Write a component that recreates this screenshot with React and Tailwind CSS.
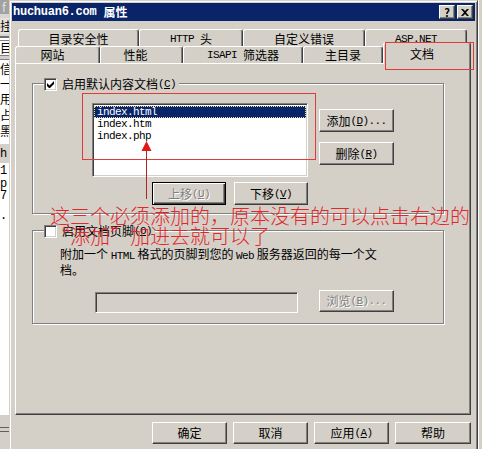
import React from 'react';

// Latin text in the dialog is a narrow mono face, like SimSun's half-width glyphs
function M({ children }) {
  return (
    <span className="font-['Liberation_Mono','Courier_New',monospace] text-[11px] tracking-[-0.6px]">
      {children}
    </span>
  );
}

function Key({ k, dots }) {
  return (
    <M>
      (<u className="underline">{k}</u>){dots ? '...' : ''}
    </M>
  );
}

function Button({ className = '', disabled, children }) {
  return (
    <div
      className={`flex items-center justify-center bg-[#d4d0c8] border border-t-white border-l-white border-r-[#404040] border-b-[#404040] shadow-[inset_-1px_-1px_0_#808080] ${
        disabled ? 'text-[#808080] [text-shadow:1px_1px_0_#ffffff]' : 'text-black'
      } ${className}`}
    >
      {children}
    </div>
  );
}

function Checkbox({ checked }) {
  return (
    <div className="w-[13px] h-[13px] shrink-0 bg-white border border-t-[#808080] border-l-[#808080] border-b-white border-r-white shadow-[inset_1px_1px_0_#404040,inset_-1px_-1px_0_#d4d0c8] flex items-center justify-center">
      {checked && (
        <svg width="7" height="7" viewBox="0 0 7 7">
          <path d="M0 2v3l2 2h1l4-4V0L2.5 4.5z" fill="#000" />
        </svg>
      )}
    </div>
  );
}

function LeftStrip() {
  return (
    <div className="w-[9px] h-full shrink-0 overflow-hidden flex flex-col bg-[#d4d0c8] text-[12px] leading-[12px] text-black">
      <div className="h-[14px] bg-[#a2a2a2] text-[#e0e0e0] pl-[2px] leading-[14px]">f</div>
      <div className="h-[4px] bg-[#d8d6d0]" />
      <div className="h-[16px] bg-[#e4e2dc] flex items-center">挂</div>
      <div className="h-[2px] bg-[#d8d6d0]" />
      <div className="h-[2px] bg-[#707070]" />
      <div className="h-[2px] bg-white" />
      <div className="h-[16px] bg-white border-y border-[#808080] flex items-center">目</div>
      <div className="h-[4px] bg-[#d4d0c8] border-b border-[#808080]" />
      <div className="flex-1 bg-white flex flex-col">
        <div className="h-[17px] flex items-center">信</div>
        <div className="h-[14px] flex items-center">一</div>
        <div className="h-[16px] flex items-center">用</div>
        <div className="h-[16px] flex items-center">占</div>
        <div className="h-[16px] flex items-center">黑</div>
        <div className="h-[5px]" />
        <div className="h-[19px] bg-[#d4d0c8] flex items-center font-['Liberation_Mono',monospace]">h</div>
        <div className="h-[15px] flex items-center font-['Liberation_Mono',monospace]">1</div>
        <div className="h-[12px] flex items-end font-['Liberation_Mono',monospace]">p</div>
        <div className="h-[11px] flex items-center font-['Liberation_Mono',monospace]">7</div>
        <div className="h-[21px] flex items-end font-['Liberation_Mono',monospace]">.</div>
      </div>
      <div className="h-[34px] bg-[#d4d0c8] flex flex-col pt-[12px] gap-[3px]">
        <div className="h-px bg-[#606060]" />
        <div className="h-px bg-[#606060]" />
      </div>
    </div>
  );
}

function TitleBar() {
  return (
    <div className="h-[18px] bg-[#0a246a] flex items-center pl-[1px] pr-[2px] text-white">
      <span className="font-bold font-['Liberation_Mono',monospace] text-[12px] tracking-[-0.25px]">huchuan6.com</span>
      <span className="font-bold text-[12px] ml-[7px]">属性</span>
      <div className="ml-auto flex gap-[2px]">
        <Button className="w-[16px] h-[14px] text-[11px] font-bold leading-none">?</Button>
        <Button className="w-[16px] h-[14px]">
          <svg width="8" height="7" viewBox="0 0 8 7">
            <path d="M0 0h2l2 2 2-2h2L5 3.5 8 7H6L4 5 2 7H0l3-3.5z" fill="#000" />
          </svg>
        </Button>
      </div>
    </div>
  );
}

function Tabs() {
  const back =
    'h-[17px] shrink-0 flex items-center justify-center border-t border-l border-r border-t-white border-l-white border-r-[#404040] shadow-[inset_-1px_0_0_#808080] rounded-t-[3px] bg-[#d4d0c8]';
  return (
    <div className="flex flex-col mt-[8px]">
      <div className="flex pl-[6px]">
        <div className={`${back} w-[121px] pt-[2px]`}>目录安全性</div>
        <div className={`${back} w-[104px] pt-[2px]`}>
          <M>HTTP</M>
          <span className="ml-[6px]">头</span>
        </div>
        <div className={`${back} w-[122px] pt-[2px]`}>自定义错误</div>
        <div className={`${back} w-[102px] pt-[2px]`}>
          <M>ASP.NET</M>
        </div>
      </div>
      <div className="flex items-end pl-[3px] h-[17px]">
        <div className={`${back} w-[85px] pr-[10px]`}>网站</div>
        <div className={`${back} w-[83px] pr-[12px]`}>性能</div>
        <div className={`${back} w-[120px]`}>
          <M>ISAPI</M>
          <span className="ml-[6px]">筛选器</span>
        </div>
        <div className={`${back} w-[80px]`}>主目录</div>
        <div className="relative z-10 w-[88px] h-[22px] -mb-px shrink-0 flex items-start justify-center pt-[4px] pr-[10px] border-t border-l border-r border-t-white border-l-white border-r-[#404040] shadow-[inset_-1px_0_0_#808080] rounded-t-[3px] bg-[#d4d0c8]">
          文档
        </div>
      </div>
    </div>
  );
}

function ListBox() {
  return (
    <div className="w-[216px] h-[74px] bg-white border border-t-[#808080] border-l-[#808080] border-b-white border-r-white shadow-[inset_1px_1px_0_#404040,inset_-1px_-1px_0_#d4d0c8] p-[1px] pt-[2px] flex flex-col">
      <div className="h-[12px] bg-[#0a246a] text-white pl-[3px] flex items-center outline-1 outline-dotted outline-[#e8e0a0] -outline-offset-1">
        <M>index.html</M>
      </div>
      <div className="h-[12px] pl-[3px] flex items-center">
        <M>index.htm</M>
      </div>
      <div className="h-[12px] pl-[3px] flex items-center">
        <M>index.php</M>
      </div>
    </div>
  );
}

function GroupDefault() {
  return (
    <div className="relative w-[412px] h-[131px] border border-[#808080] shadow-[inset_1px_1px_0_#ffffff,1px_1px_0_#ffffff] pl-[59px] pt-[19px] flex">
      <div className="absolute left-[11px] top-[-7px] flex items-center bg-[#d4d0c8] pr-[3px]">
        <Checkbox checked />
        <span className="ml-[5px]">启用默认内容文档</span>
        <Key k="C" />
      </div>
      <div className="flex flex-col">
        <ListBox />
        <div className="flex justify-end gap-[8px] mt-[5px]">
          <div className="w-[74px] h-[23px] flex items-center justify-center bg-[#d4d0c8] border border-black shadow-[inset_1px_1px_0_#ffffff,inset_-1px_-1px_0_#404040,inset_-2px_-2px_0_#808080] text-[#808080] [text-shadow:1px_1px_0_#ffffff]">
            上移<Key k="U" />
          </div>
          <Button className="w-[74px] h-[23px]">
            下移<Key k="V" />
          </Button>
        </div>
      </div>
      <div className="flex flex-col ml-[11px] mt-[6px] gap-[10px]">
        <Button className="w-[75px] h-[23px]">
          添加<Key k="D" dots />
        </Button>
        <Button className="w-[75px] h-[23px]">
          删除<Key k="R" />
        </Button>
      </div>
    </div>
  );
}

function GroupFooter() {
  return (
    <div className="relative w-[412px] h-[94px] border border-[#808080] shadow-[inset_1px_1px_0_#ffffff,1px_1px_0_#ffffff] mt-[16px] pt-[16px] flex flex-col">
      <div className="absolute left-[11px] top-[-7px] flex items-center bg-[#d4d0c8] pr-[3px]">
        <Checkbox />
        <span className="ml-[5px]">启用文档页脚</span>
        <Key k="O" />
      </div>
      <div className="pl-[27px] leading-[13px]">
        附加一个 <M>HTML</M> 格式的页脚到您的 <M>Web</M> 服务器返回的每一个文
        <br />
        档。
      </div>
      <div className="flex items-start pl-[62px] mt-[14px]">
        <div className="w-[203px] h-[21px] mt-[2px] bg-[#d4d0c8] border border-t-[#808080] border-l-[#808080] border-b-white border-r-white shadow-[inset_1px_1px_0_#404040,inset_-1px_-1px_0_#d4d0c8]" />
        <Button disabled className="w-[75px] h-[22px] ml-[21px]">
          浏览<Key k="B" dots />
        </Button>
      </div>
    </div>
  );
}

function Dialog() {
  return (
    <div className="w-[469px] h-[456px] shrink-0 bg-[#d4d0c8] border border-t-[#d4d0c8] border-l-[#d4d0c8] border-r-[#404040] border-b-[#404040] shadow-[inset_1px_1px_0_#ffffff,inset_-1px_-1px_0_#808080] p-[2px] flex flex-col">
      <TitleBar />
      <Tabs />
      <div className="ml-[3px] w-[456px] h-[352px] shrink-0 border border-t-white border-l-white border-r-[#404040] border-b-[#404040] shadow-[inset_-1px_-1px_0_#808080] pl-[16px] pt-[19px] flex flex-col">
        <GroupDefault />
        <GroupFooter />
      </div>
      <div className="ml-[3px] w-[456px] mt-[7px] flex justify-end gap-[6px]">
        <Button className="w-[75px] h-[22px]">确定</Button>
        <Button className="w-[75px] h-[22px]">取消</Button>
        <Button className="w-[75px] h-[22px]">
          应用<Key k="A" />
        </Button>
        <Button className="w-[76px] h-[22px]">帮助</Button>
      </div>
    </div>
  );
}

export default function App() {
  return (
    <div className="relative w-[482px] h-[449px] overflow-hidden flex bg-[#d4d0c8] text-black text-[12px] leading-[14px] font-['Noto_Sans_CJK_SC',sans-serif]">
      <LeftStrip />
      <Dialog />
      <div className="flex-1 border-l border-white bg-[#d4d0c8]" />

      {/* 红色标注 */}
      <div className="absolute left-[385px] top-[42px] w-[89px] h-[28px] border border-[#e03a3a] z-20" />
      <div className="absolute left-[82px] top-[93px] w-[234px] h-[67px] border border-[#e03a3a] z-20" />
      <svg className="absolute left-[140px] top-[140px] z-20" width="12" height="60" viewBox="0 0 12 60">
        <polygon points="6.5,1 1.5,11 11.5,11" fill="#e01818" />
        <line x1="6.5" y1="11" x2="6.5" y2="59" stroke="#b02424" strokeWidth="1" />
      </svg>
      <div className="absolute left-[50px] top-[206px] w-[430px] z-20 text-[20px] leading-[20px] font-light text-[#e2262c] whitespace-nowrap">
        这三个必须添加的，原本没有的可以点击右边的
        <br />
        “添加”加进去就可以了
      </div>
    </div>
  );
}
